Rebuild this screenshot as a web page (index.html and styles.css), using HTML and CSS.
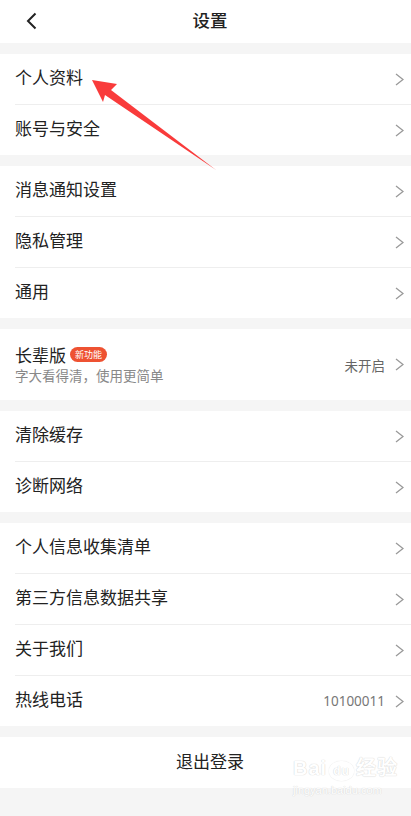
FILE: index.html
```html
<!doctype html>
<html lang="zh-CN">
<head>
	<meta charset="utf-8">
	<meta name="viewport" content="width=device-width, initial-scale=1">
	<title>设置</title>
	<link rel="stylesheet" href="styles.css">
</head>
<body>

	<header class="topbar">
		<span class="back">
			<svg width="12" height="18" viewBox="0 0 12 18"><path d="M10.5 1.5 L3 9 L10.5 16.5" fill="none" stroke="#222" stroke-width="2"/></svg>
		</span>
		<h1 class="title">设置</h1>
	</header>

	<main>
		<section class="group">
			<div class="row"><span class="label">个人资料</span><svg class="arrow" viewBox="0 0 9 13"><path d="M1 1 L8 6.5 L1 12"/></svg></div>
			<div class="row"><span class="label">账号与安全</span><svg class="arrow" viewBox="0 0 9 13"><path d="M1 1 L8 6.5 L1 12"/></svg></div>
		</section>

		<section class="group">
			<div class="row"><span class="label">消息通知设置</span><svg class="arrow" viewBox="0 0 9 13"><path d="M1 1 L8 6.5 L1 12"/></svg></div>
			<div class="row"><span class="label">隐私管理</span><svg class="arrow" viewBox="0 0 9 13"><path d="M1 1 L8 6.5 L1 12"/></svg></div>
			<div class="row"><span class="label">通用</span><svg class="arrow" viewBox="0 0 9 13"><path d="M1 1 L8 6.5 L1 12"/></svg></div>
		</section>

		<section class="group">
			<div class="row row-elder">
				<div class="elder-text">
					<span class="label">长辈版 <span class="badge">新功能</span></span>
					<span class="sub">字大看得清，使用更简单</span>
				</div>
				<span class="value">未开启</span><svg class="arrow" viewBox="0 0 9 13"><path d="M1 1 L8 6.5 L1 12"/></svg>
			</div>
		</section>

		<section class="group">
			<div class="row"><span class="label">清除缓存</span><svg class="arrow" viewBox="0 0 9 13"><path d="M1 1 L8 6.5 L1 12"/></svg></div>
			<div class="row"><span class="label">诊断网络</span><svg class="arrow" viewBox="0 0 9 13"><path d="M1 1 L8 6.5 L1 12"/></svg></div>
		</section>

		<section class="group">
			<div class="row"><span class="label">个人信息收集清单</span><svg class="arrow" viewBox="0 0 9 13"><path d="M1 1 L8 6.5 L1 12"/></svg></div>
			<div class="row"><span class="label">第三方信息数据共享</span><svg class="arrow" viewBox="0 0 9 13"><path d="M1 1 L8 6.5 L1 12"/></svg></div>
			<div class="row"><span class="label">关于我们</span><svg class="arrow" viewBox="0 0 9 13"><path d="M1 1 L8 6.5 L1 12"/></svg></div>
			<div class="row"><span class="label">热线电话</span><span class="value num">10100011</span><svg class="arrow" viewBox="0 0 9 13"><path d="M1 1 L8 6.5 L1 12"/></svg></div>
		</section>

		<section class="group group-logout">
			<div class="logout">退出登录</div>
		</section>
	</main>

	<!-- annotation arrow over the first row -->
	<svg class="pointer" width="411" height="200" viewBox="0 0 411 200">
		<polygon points="92,80 117,84 111,90 216,170 105,95 103,102" fill="#f93b3b"/>
	</svg>

	<div class="watermark">
		<div class="wm-logo">Bai<span class="wm-du">du</span>经验</div>
		<div class="wm-url">jingyan.baidu.com</div>
	</div>

</body>
</html>
```

FILE: styles.css
```css
:root {
	--bg: #f5f5f5;
	--text: #222;
	--muted: #888;
	--line: #eeeeee;
	--chevron: #999;
}

html {
	background: var(--bg);
}
body {
	margin: 0;
	min-height: 816px;
	background: var(--bg);
	font-family: "Noto Sans CJK SC", "Noto Sans", sans-serif;
	color: var(--text);
	position: relative;
}

.topbar {
	height: 43px;
	background: #fff;
	display: flex;
	align-items: center;
	justify-content: center;
	position: relative;
}
.back {
	position: absolute;
	left: 25px;
	top: 12px;
	line-height: 0;
}
.title {
	margin: 0 0 3px;
	padding-left: 9px;
	font-size: 17.5px;
	font-weight: 500;
	line-height: 1;
}

main {
	display: flex;
	flex-direction: column;
	gap: 11px;
	padding-top: 11px;
}
.group {
	background: #fff;
	padding-left: 15px;
}
.row {
	height: 50px;
	display: flex;
	align-items: center;
	padding-right: 7px;
	border-bottom: 1px solid var(--line);
}
.row:last-child {
	border-bottom: none;
}
.label {
	flex: 1;
	font-size: 17px;
	line-height: 1;
	display: flex;
	align-items: center;
}
.row > .label {
	margin-bottom: 5px;
}
.arrow {
	width: 9px;
	height: 13px;
	fill: none;
	stroke: var(--chevron);
	stroke-width: 1.3;
}
.value {
	font-size: 13.5px;
	color: #666;
	margin-right: 10px;
}
.num {
	font-family: "Noto Sans", sans-serif;
	font-size: 13.5px;
	color: #777;
	margin-right: 10px;
}

.row-elder {
	height: 71px;
}
.elder-text {
	flex: 1;
	display: flex;
	flex-direction: column;
	gap: 6px;
}
.badge {
	display: inline-block;
	margin-left: 4px;
	height: 15px;
	line-height: 15px;
	padding: 0 5px;
	border-radius: 8px;
	background: #ee5232;
	color: #fff;
	font-size: 9px;
}
.sub {
	font-size: 13.5px;
	color: var(--muted);
	line-height: 1;
}

.group-logout {
	padding-left: 0;
}
.logout {
	height: 51px;
	display: flex;
	align-items: center;
	justify-content: center;
	padding-left: 9px;
	padding-bottom: 4px;
	box-sizing: border-box;
	font-size: 17px;
}

.pointer {
	position: absolute;
	left: 0;
	top: 0;
	pointer-events: none;
}

.watermark {
	position: absolute;
	left: 293px;
	top: 758px;
	color: #fff;
	text-shadow: 0 0 1px #d6d6d6, 0 0 1px #d6d6d6;
	font-family: "Liberation Sans", sans-serif;
	font-weight: bold;
}
.wm-logo {
	font-size: 20px;
	line-height: 1;
	letter-spacing: 1px;
}
.wm-du {
	display: inline-block;
	font-size: 12px;
	padding: 2px 2px;
	margin: 0 2px;
	border: 2px solid #fff;
	border-radius: 50%;
	box-shadow: 0 0 1px #ccc;
}
.wm-url {
	font-size: 11px;
	font-weight: normal;
	margin-top: 3px;
}
```
